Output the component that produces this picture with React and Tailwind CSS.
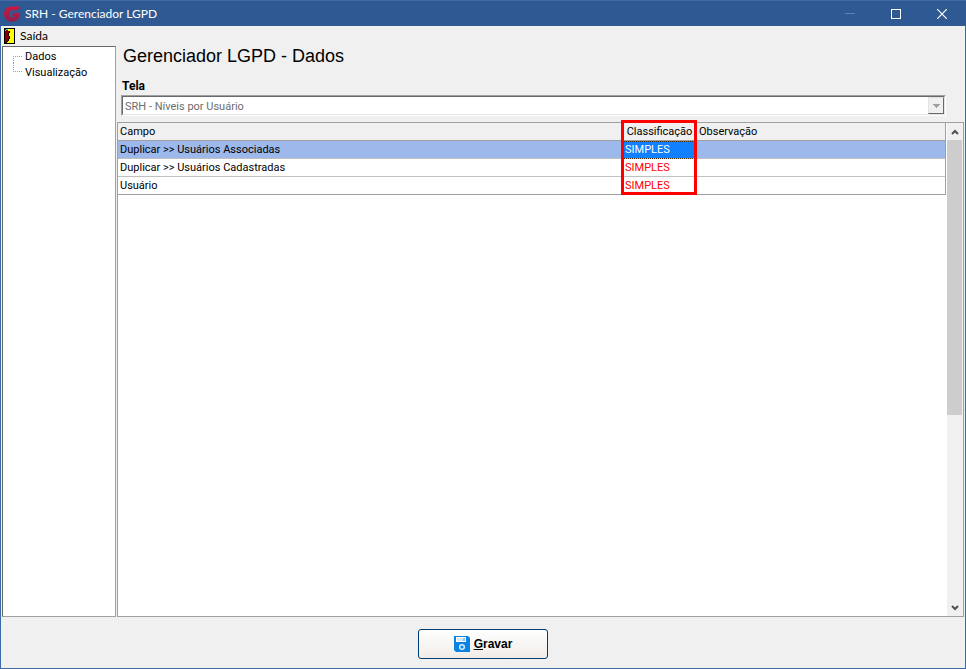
const rows = [
  { campo: "Duplicar >> Usuários Associadas", classificacao: "SIMPLES" },
  { campo: "Duplicar >> Usuários Cadastradas", classificacao: "SIMPLES" },
  { campo: "Usuário", classificacao: "SIMPLES" },
];

function Logo() {
  return (
    <svg width="17" height="16" viewBox="0 0 17 16" aria-hidden="true">
      <defs>
        <linearGradient id="logo" x1="0" y1="0" x2="0" y2="1">
          <stop offset="0" stopColor="#d3143f" />
          <stop offset="1" stopColor="#8f1f4c" />
        </linearGradient>
      </defs>
      <path
        d="M16 0.500 13.500 4.300H8.500C6 4.300 5 6 5 8s1.200 3.500 3.300 3.500c1.300 0 2.200-.4 2.700-1.300H7.800l2-3.400H16C16 12.400 13 15.700 8 15.700 3.300 15.700 0 12.600 0 8.100S3.300.500 8 .500Z"
        fill="url(#logo)"
      />
    </svg>
  );
}

function DoorIcon() {
  return (
    <svg width="11" height="16" viewBox="0 0 11 16" shapeRendering="crispEdges" aria-hidden="true">
      <path d="M0 0h11v16H0z" fill="#000" />
      <path d="M4 1h6v14H3v-1h1z" fill="#ff0" />
      <path d="M1 1h3v2h1v8H4v2H3v1H2v1H1z" fill="#800000" />
      <path d="M2 1h2v1H2zM1 2h1v1H1z" fill="#0ff" />
      <path d="M5 3h1v2H5zM4 5h1v2H4zM5 8h1v3H5zM4 11h1v2H4zM3 13h1v1H3z" fill="#000" />
    </svg>
  );
}

function SaveIcon() {
  return (
    <svg width="16" height="16" viewBox="0 0 16 16" aria-hidden="true">
      <path d="M0 0h14l2 2v14H2l-2-2z" fill="#0a84e4" />
      <path d="M2 1h10v5H2z" fill="#fff" />
      <path d="M3 2h6v3H3z" fill="#d3e9fb" />
      <path d="M9 2h2v3H9z" fill="#8cc6f5" />
      <circle cx="8" cy="11" r="2.300" fill="none" stroke="#d9edfc" strokeWidth="1.500" />
    </svg>
  );
}

function TitleBar() {
  return (
    <header className="flex h-[26px] shrink-0 items-center border-t border-[#3f6aa2] bg-[#2e5992] pr-px pl-1 text-white">
      <Logo />
      <h1 className="ml-1 flex-1 font-['Lato',sans-serif] text-[12px] leading-4">
        SRH - Gerenciador LGPD
      </h1>
      <button type="button" aria-label="Minimizar" disabled className="flex h-full w-[46px] items-center justify-center">
        <span className="h-px w-[10px] bg-[#5f82b3]" />
      </button>
      <button type="button" aria-label="Maximizar" className="flex h-full w-[46px] items-center justify-center">
        <span className="size-[10px] border border-white" />
      </button>
      <button type="button" aria-label="Fechar" className="flex h-full w-[46px] items-center justify-center">
        <svg width="10" height="10" viewBox="0 0 10 10" aria-hidden="true">
          <path d="M0 0 10 10M10 0 0 10" stroke="#fff" strokeWidth="1.200" />
        </svg>
      </button>
    </header>
  );
}

function Sidebar() {
  return (
    <nav className="w-[114px] shrink-0 border border-[#a0a0a0] border-t-[#696969] border-l-[#696969] bg-white pl-[10px]">
      <ul className="flex flex-col">
        {["Dados", "Visualização"].map((item, i) => (
          <li key={item} className="flex h-4 items-start">
            <span
              className={
                i === 0
                  ? "mt-[9px] h-[7px] w-[9px] border-t border-l border-dotted border-[#a0a0a0]"
                  : "h-[9px] w-[9px] border-b border-l border-dotted border-[#a0a0a0]"
              }
            />
            <a href={`#${item}`} className="ml-[3px] pt-[2px] text-[11px] leading-4">
              {item}
            </a>
          </li>
        ))}
      </ul>
    </nav>
  );
}

function ScreenField() {
  return (
    <div className="mr-[18px] ml-1">
      <label htmlFor="tela" className="block pl-px text-[12px] leading-4 font-bold">
        Tela
      </label>
      <div className="relative mt-px h-[21px] border border-white border-t-[#a0a0a0] border-l-[#a0a0a0]">
        <select
          id="tela"
          disabled
          className="block size-full appearance-none border border-[#e3e3e3] border-t-[#696969] border-l-[#696969] bg-white pt-[2px] pl-[2px] text-[11px] text-[#6d6d6d] opacity-100"
        >
          <option>SRH - Níveis por Usuário</option>
        </select>
        <span className="pointer-events-none absolute inset-y-px right-px flex w-4 items-center justify-center border border-[#696969] border-t-[#e3e3e3] border-l-[#e3e3e3] bg-[#f0f0f0]">
          <svg width="7" height="4" viewBox="0 0 7 4" shapeRendering="crispEdges" aria-hidden="true">
            <path d="M0 0h7v1H6v1H5v1H4v1H3V3H2V2H1V1H0z" fill="#a0a0a0" />
          </svg>
        </span>
      </div>
    </div>
  );
}

function DataTable() {
  return (
    <table className="w-full table-fixed border-separate border-spacing-0 text-left text-[11px] leading-4">
      <colgroup>
        <col />
        <col className="w-[75px]" />
        <col className="w-[249px]" />
      </colgroup>
      <thead className="bg-[#f0f0f0]">
        <tr className="h-[18px]">
          <th className="border-b border-[#a0a0a0] p-0 pt-px pl-[2px] font-normal">Campo</th>
          <th className="relative border-b border-[#a0a0a0] p-0 pt-px text-center font-normal">
            Classificação
            {/* frame around the whole classification column */}
            <span className="pointer-events-none absolute -top-[3px] -left-px z-10 h-[75px] w-[76px] border-3 border-[#f00]" />
          </th>
          <th className="border-r border-b border-[#a0a0a0] p-0 pt-px pl-[2px] font-normal">Observação</th>
        </tr>
      </thead>
      <tbody>
        {rows.map((row, i) => {
          const selected = i === 0;
          const line = i === rows.length - 1 ? "border-b border-[#a0a0a0]" : "border-b border-[#c0c0c0]";
          return (
            <tr key={row.campo} className={selected ? "h-[18px] bg-[#9db8eb]" : "h-[18px]"}>
              <td className={`${line} p-0 pt-px pl-[2px]`}>{row.campo}</td>
              <td
                className={`${line} p-0 pt-px pl-[3px] ${
                  selected
                    ? "bg-[#1080ff] text-white outline-1 -outline-offset-1 outline-dotted outline-[#4a2c00]"
                    : "text-[#f00]"
                }`}
              >
                {row.classificacao}
              </td>
              <td className={`${line} border-r border-r-[#a0a0a0] p-0`}></td>
            </tr>
          );
        })}
      </tbody>
    </table>
  );
}

function ScrollBar() {
  return (
    <div className="ml-px flex w-[16px] shrink-0 flex-col bg-[#f0f0f0]">
      <button type="button" aria-label="Rolar para cima" className="flex h-[17px] items-center justify-center">
        <svg width="8" height="6" viewBox="0 0 8 6" aria-hidden="true">
          <path d="M1 5 4 2l3 3" fill="none" stroke="#505050" strokeWidth="2" />
        </svg>
      </button>
      <div className="flex-1">
        <div className="h-[60%] w-[15px] bg-[#cdcdcd]" />
      </div>
      <button type="button" aria-label="Rolar para baixo" className="flex h-[17px] items-center justify-center">
        <svg width="8" height="6" viewBox="0 0 8 6" aria-hidden="true">
          <path d="M1 1l3 3 3-3" fill="none" stroke="#505050" strokeWidth="2" />
        </svg>
      </button>
    </div>
  );
}

export default function App() {
  return (
    <div className="flex h-screen flex-col bg-[#f0f0f0] font-['Roboto',Arial,sans-serif] text-black">
      <TitleBar />
      <div className="flex min-h-0 flex-1 flex-col border border-t-0 border-[#3f6aa8]">
        <div className="flex h-5 shrink-0 items-center pl-[3px]">
          <button type="button" className="flex items-center gap-[5px] font-['Lato',sans-serif] text-[12px] leading-4">
            <DoorIcon />
            Saída
          </button>
        </div>
        <div className="flex min-h-0 flex-1 pr-px pl-px">
          <Sidebar />
          <main className="ml-px flex min-w-0 flex-1 flex-col">
            <h2 className="pl-[6px] font-['Liberation_Sans',Arial,sans-serif] text-[18px] leading-5">
              Gerenciador LGPD - Dados
            </h2>
            <div className="mt-3">
              <ScreenField />
            </div>
            <div className="mt-[6px] flex min-h-0 flex-1 border border-[#a0a0a0] bg-white">
              <div className="min-w-0 flex-1">
                <DataTable />
              </div>
              <ScrollBar />
            </div>
          </main>
        </div>
        <footer className="flex h-[51px] shrink-0 items-center justify-center pt-[2px]">
          <button
            type="button"
            className="flex h-[30px] w-[130px] items-center justify-center gap-1 rounded-[3px] border border-[#003c74] bg-linear-to-b from-white to-[#f0ece8] font-['Liberation_Sans',Arial,sans-serif] text-[12px] font-bold"
          >
            <SaveIcon />
            <span>
              <span className="underline">G</span>ravar
            </span>
          </button>
        </footer>
      </div>
    </div>
  );
}
